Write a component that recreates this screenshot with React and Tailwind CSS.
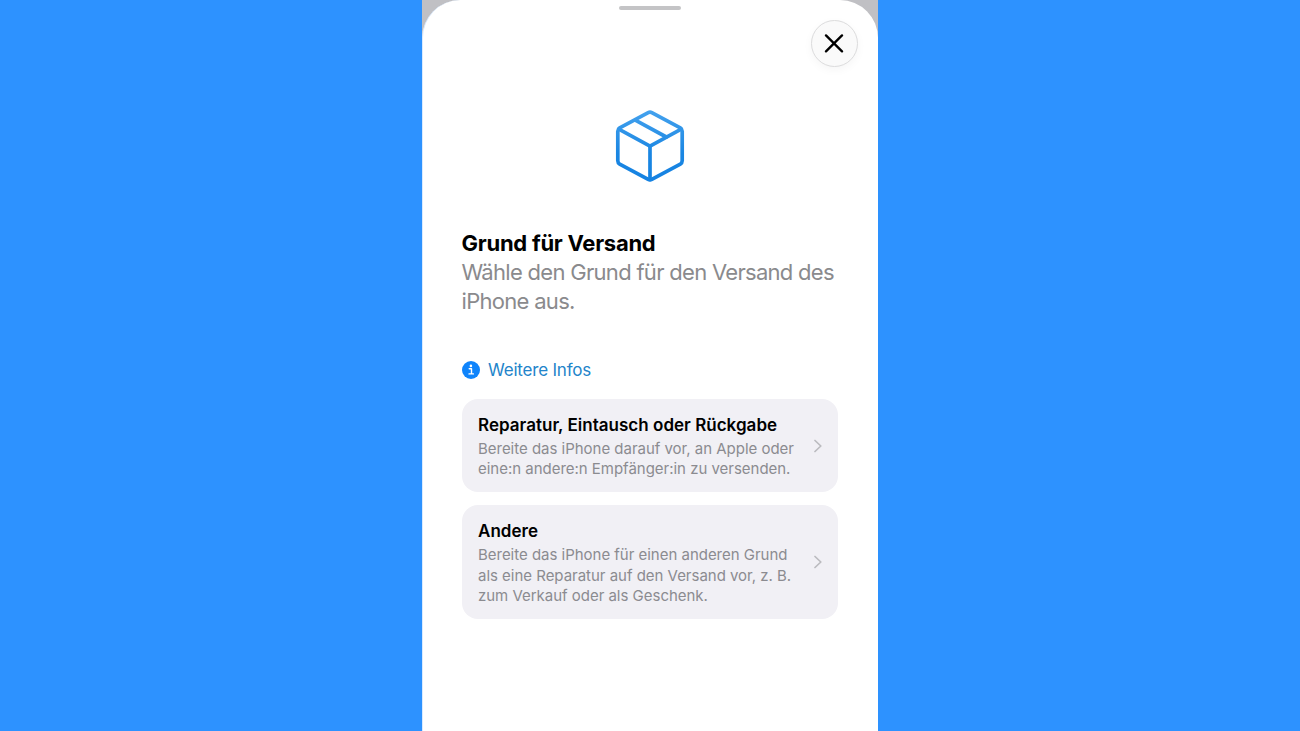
const options = [
  {
    title: "Reparatur, Eintausch oder Rückgabe",
    lines: [
      "Bereite das iPhone darauf vor, an Apple oder",
      "eine:n andere:n Empfänger:in zu versenden.",
    ],
  },
  {
    title: "Andere",
    lines: [
      "Bereite das iPhone für einen anderen Grund",
      "als eine Reparatur auf den Versand vor, z. B.",
      "zum Verkauf oder als Geschenk.",
    ],
  },
];

function BoxIcon() {
  return (
    <svg width="76" height="76" viewBox="0 0 76 76" fill="none">
      <defs>
        <linearGradient id="box" x1="0" y1="2" x2="0" y2="74" gradientUnits="userSpaceOnUse">
          <stop offset="0" stopColor="#44a2ee" />
          <stop offset="0.6" stopColor="#1a86e2" />
          <stop offset="1" stopColor="#1582e2" />
        </linearGradient>
      </defs>
      <g stroke="url(#box)" strokeWidth="3.7" strokeLinejoin="round" strokeLinecap="round">
        <path d="M36.2 4.6Q38 3.6 39.8 4.6L68.3 19.8Q70.2 21 70.2 23.2V52.8Q70.2 55 68.3 56.1L39.8 71.4Q38 72.4 36.2 71.4L7.7 56.1Q5.8 55 5.8 52.8V23.2Q5.8 21 7.7 19.8Z" />
        <path d="M6.8 21.2L38 38.2L69.2 21.2" />
        <path d="M38 38.2V71.5" />
        <path d="M23.3 12.2L54.3 29" />
      </g>
    </svg>
  );
}

function CloseButton() {
  return (
    <button
      type="button"
      aria-label="Schließen"
      className="flex size-[47px] items-center justify-center rounded-full border border-[#dcdcdd] bg-[#fafafa] pr-px shadow-[0_3px_10px_rgba(0,0,0,0.04)]"
    >
      <svg width="20" height="20" viewBox="0 0 20 20" fill="none">
        <path d="M2 2.4L18 18.4M18 2.4L2 18.4" stroke="#000" strokeWidth="2.3" strokeLinecap="round" />
      </svg>
    </button>
  );
}

function InfoIcon() {
  return (
    <svg width="18" height="18" viewBox="0 0 18 18">
      <circle cx="9" cy="9" r="9" fill="#0f84fb" />
      <circle cx="8.9" cy="4.9" r="1.3" fill="#fff" />
      <path
        d="M7.2 7.8H9.5V12.8M7 12.9H11.4"
        fill="none"
        stroke="#fff"
        strokeWidth="1.4"
        strokeLinecap="round"
        strokeLinejoin="round"
      />
    </svg>
  );
}

function OptionCard({ title, lines }) {
  return (
    <button
      type="button"
      className="flex w-full items-center justify-between rounded-[16px] bg-[#f1f0f5] pt-[14.6px] pr-4 pb-3 pl-[16.5px] text-left"
    >
      <span className="block">
        <span className="block text-[17px] leading-[23px] font-semibold tracking-[0.02px] text-black">
          {title}
        </span>
        <span className="mt-[2px] block text-[15px] leading-[20.8px] tracking-[-0.02px] whitespace-nowrap text-[#8b8b90]">
          {lines.map((line) => (
            <span key={line} className="block">
              {line}
            </span>
          ))}
        </span>
      </span>
      <svg width="8" height="14" viewBox="0 0 8 14" fill="none" className="mb-[2px] shrink-0">
        <path d="M1 1.5L6.8 7L1 12.5" stroke="#bbbbbf" strokeWidth="1.7" strokeLinecap="round" strokeLinejoin="round" />
      </svg>
    </button>
  );
}

export default function App() {
  return (
    <div className="flex h-[731px] justify-center overflow-hidden bg-[#2d92ff] font-['Inter','Liberation_Sans',sans-serif]">
      <div className="w-[456px] bg-[#c0c0c4]">
        <main className="relative flex h-full flex-col rounded-t-[38px] border-l border-[#d8eaff] bg-white pr-[40px] pl-[38.5px]">
          <div className="mt-[6px] h-1 w-[62px] self-center rounded-full bg-[#c4c4c6]" />
          <div className="absolute top-[19.5px] right-5">
            <CloseButton />
          </div>

          <div className="mt-[98px] flex justify-center">
            <BoxIcon />
          </div>

          <h1 className="mt-[45px] text-[22px] leading-[29px] font-bold tracking-[-0.26px] text-black">
            Grund für Versand
          </h1>
          <p className="text-[22px] leading-[29px] tracking-[-0.7px] whitespace-nowrap text-[#8a8a8d]">
            Wähle den Grund für den Versand des
            <br />
            iPhone aus.
          </p>

          <a className="mt-[42px] flex h-6 items-center gap-2 pl-[0.5px] text-[17px] tracking-[-0.2px] text-[#2384ca]">
            <InfoIcon />
            <span className="pt-px">Weitere Infos</span>
          </a>

          <div className="mt-[17px] flex flex-col gap-[13px]">
            {options.map((option) => (
              <OptionCard key={option.title} {...option} />
            ))}
          </div>
        </main>
      </div>
    </div>
  );
}
